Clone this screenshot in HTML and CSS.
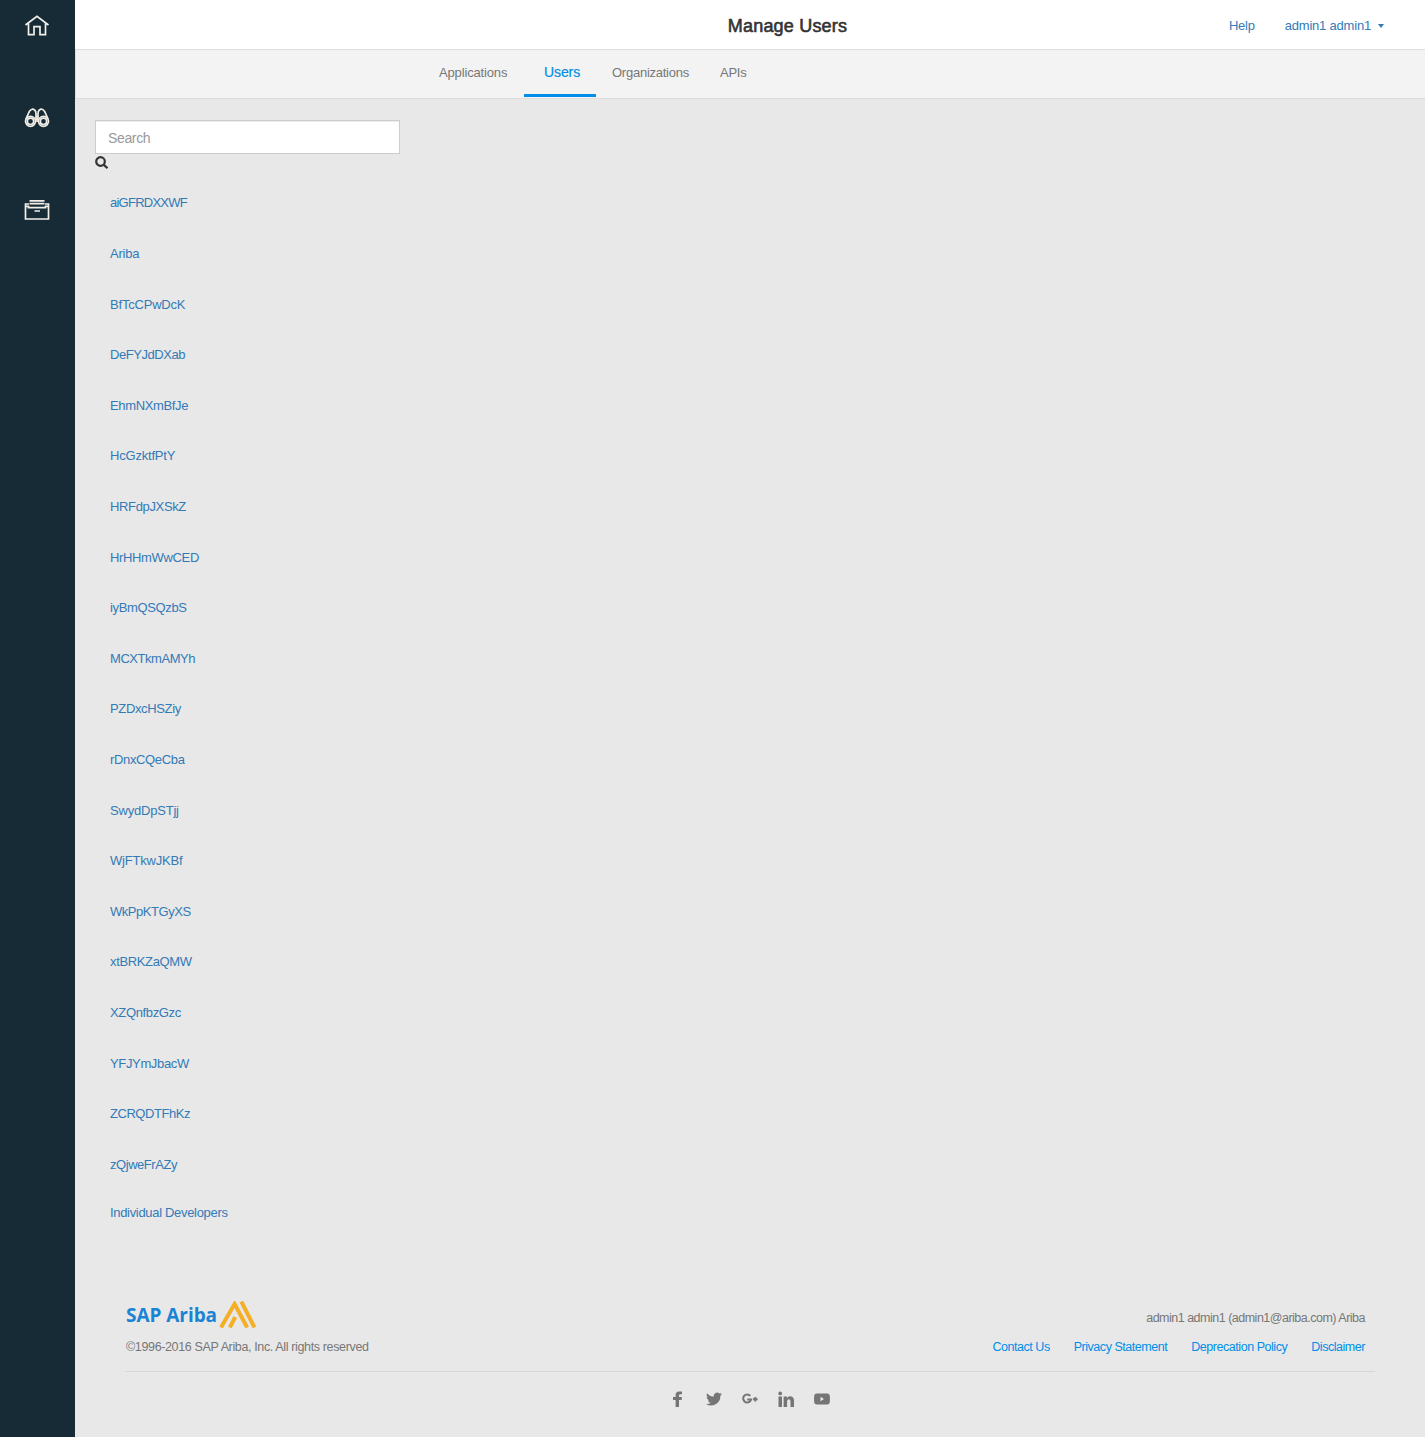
FILE: index.html
```html
<!DOCTYPE html>
<html lang="en">
<head>
<meta charset="utf-8">
<title>Manage Users</title>
<link rel="stylesheet" href="styles.css">
</head>
<body>
<div class="app">
  <aside class="sidebar">
    <a class="side-link"><svg width="26" height="22" viewBox="0 0 26 22"><path d="M1.500 10 13 1.300l11.500 8.700M4.500 8.500v11.200h5.500v-8h6v8h5.500V8.500"/></svg></a>
    <a class="side-link"><svg width="26" height="22" viewBox="0 0 26 22"><circle cx="6.500" cy="14.300" r="5"/><circle cx="6.500" cy="14.300" r="3.200"/><circle cx="19.500" cy="14.300" r="5"/><circle cx="19.500" cy="14.300" r="3.200"/><path d="M1.900 12 5.500 4.200Q8 .8 10.800 3.200Q12 4.500 12 7v8M24.100 12 20.500 4.200Q18 .8 15.200 3.200Q14 4.500 14 7v8M12 9.500h2M12 12h2"/></svg></a>
    <a class="side-link"><svg width="26" height="22" viewBox="0 0 26 22"><path d="M5 5H1.500v15h23V5H21M5.500 1.800h15M5.500 4.700h15M2 7.300h2.500v1.400h17V7.300H24M10.500 12h5.500"/></svg></a>
  </aside>
  <div class="page">
    <header class="topbar">
      <h1 class="title">Manage Users</h1>
      <div class="account"><a class="help">Help</a><a class="user">admin1 admin1</a><span class="caret"></span></div>
    </header>
    <nav class="tabs">
      <a class="tab tab-applications">Applications</a>
      <a class="tab active">Users</a>
      <a class="tab tab-organizations">Organizations</a>
      <a class="tab tab-apis">APIs</a>
    </nav>
    <main class="content">
      <input class="search" type="text" placeholder="Search">
      <svg class="search-icon" width="14" height="14" viewBox="0 0 14 14"><circle cx="5.500" cy="5.500" r="4.300"/><path d="m8.600 8.600 3.900 3.700"/></svg>
      <ul class="orgs">
        <li><a class="condensed">aiGFRDXXWF</a></li>
        <li><a class="loose">Ariba</a></li>
        <li><a class="loose">BfTcCPwDcK</a></li>
        <li><a class="tight">DeFYJdDXab</a></li>
        <li><a>EhmNXmBfJe</a></li>
        <li><a class="loose">HcGzktfPtY</a></li>
        <li><a>HRFdpJXSkZ</a></li>
        <li><a>HrHHmWwCED</a></li>
        <li><a>iyBmQSQzbS</a></li>
        <li><a class="tight">MCXTkmAMYh</a></li>
        <li><a>PZDxcHSZiy</a></li>
        <li><a>rDnxCQeCba</a></li>
        <li><a class="loose">SwydDpSTjj</a></li>
        <li><a class="loose">WjFTkwJKBf</a></li>
        <li><a class="tight">WkPpKTGyXS</a></li>
        <li><a>xtBRKZaQMW</a></li>
        <li><a>XZQnfbzGzc</a></li>
        <li><a>YFJYmJbacW</a></li>
        <li><a class="tight">ZCRQDTFhKz</a></li>
        <li><a class="tight">zQjweFrAZy</a></li>
      </ul>
      <a class="individual">Individual Developers</a>
    </main>
    <footer class="footer">
      <div class="footer-main">
        <div class="brand">
          <div class="logo"><span class="logo-text">SAP Ariba</span><svg width="38" height="27" viewBox="0 0 38 27"><path d="M2 26.500 15.600 3 28.200 26.500M22.300 .5 35.500 26.500M10.800 26.500 16.300 16"/></svg></div>
          <p class="copyright">©1996-2016 SAP Ariba, Inc. All rights reserved</p>
        </div>
        <div class="legal">
          <p class="identity">admin1 admin1 (admin1@ariba.com) Ariba</p>
          <div class="links"><a>Contact Us</a><a>Privacy Statement</a><a>Deprecation Policy</a><a>Disclaimer</a></div>
        </div>
      </div>
      <div class="social">
        <svg width="16" height="16" viewBox="0 0 16 16"><path d="M5.600 16V9H3V6h2.600V4Q5.600.5 9.200.5H12v2.700h-1.700Q9 3.200 9 4.500V6h3l-.4 3H9v7z"/></svg>
        <svg width="16" height="16" viewBox="0 0 24 24"><path d="M24 4.600a10 10 0 0 1-2.800.8 5 5 0 0 0 2.100-2.700 10 10 0 0 1-3.100 1.200 4.900 4.900 0 0 0-8.400 4.500A14 14 0 0 1 1.700 3.200a4.900 4.900 0 0 0 1.500 6.500 5 5 0 0 1-2.200-.6 4.900 4.900 0 0 0 3.900 4.900 5 5 0 0 1-2.200.1 4.900 4.900 0 0 0 4.600 3.400A9.900 9.900 0 0 1 0 19.500a14 14 0 0 0 21.500-12.400A10 10 0 0 0 24 4.600z"/></svg>
        <svg width="16" height="16" viewBox="0 0 16 16"><path class="line" d="M8.300 4.900A4 4 0 1 0 9.100 8.500H5.300M11 8.300h4.600M13.300 6v4.600"/></svg>
        <svg width="16" height="16" viewBox="0 0 16 16"><path d="M.5 5.500h3.500V16H.5zM2.200.5a1.900 1.900 0 1 1 0 3.800 1.900 1.900 0 0 1 0-3.800zM5.600 5.500h3.300v1.400Q10 5.200 12 5.200q4 0 4 4.500V16h-3.500v-5.600q0-2.200-1.700-2.200Q9.100 8.200 9.100 10.400V16H5.600z"/></svg>
        <svg width="16" height="16" viewBox="0 0 16 16"><path fill-rule="evenodd" d="M3 2.600Q8 2.200 13 2.600q2.800 0 2.800 2.700.3 2.700 0 5.400 0 2.700-2.800 2.700-5 .4-10 0-2.800 0-2.800-2.700-.3-2.700 0-5.400Q.2 2.600 3 2.600zM6.500 5.800v4.400L10 8z"/></svg>
      </div>
    </footer>
  </div>
</div>
</body>
</html>
```
FILE: styles.css
```css
* { box-sizing: border-box; }
body { margin: 0; font: 13px/20px "Liberation Sans", Arial, sans-serif; letter-spacing: -0.25px; color: #777; background: #e8e8e8; }
h1, p, ul { margin: 0; padding: 0; font-weight: normal; }
ul { list-style: none; }
svg { display: block; flex: none; }
.app { display: flex; height: 1437px; }
.sidebar { width: 75px; background: #172b36; display: flex; flex-direction: column; align-items: center; gap: 70px; padding: 15px 1px 0 0; }
.side-link svg { fill: none; stroke: #f2efe9; stroke-width: 1.700; }
.page { flex: 1; display: flex; flex-direction: column; }
.topbar { height: 50px; background: #fff; border-bottom: 1px solid #ddd; display: grid; grid-template-columns: 1fr auto 1fr; align-items: center; padding: 2px 41px 0 116px; }
.title { grid-column: 2; font-size: 18px; letter-spacing: 0.2px; color: #333; -webkit-text-stroke: 0.6px #333; }
.account { justify-self: end; display: flex; align-items: center; color: #337ab7; }
.user { margin-left: 30px; letter-spacing: -0.2px; }
.caret { margin: 1px 0 0 7px; border: 3.500px solid transparent; border-top-width: 4px; border-top-color: #337ab7; border-bottom: 0; }
.tabs { height: 49px; background: #f3f3f3; border-bottom: 1px solid #ddd; border-left: 1px solid #ddd; padding-left: 363px; display: flex; }
.tab { height: 47px; padding-top: 13px; }
.tab-applications { width: 85px; letter-spacing: -0.15px; }
.active { width: 72px; text-align: center; padding: 12px 0 0 4px; font-size: 14px; letter-spacing: -0.1px; color: #008ee8; border-bottom: 3px solid #008ee8; -webkit-text-stroke: 0.2px #008ee8; }
.tab-organizations { margin-left: 16px; width: 108px; }
.content { padding: 21px 20px 0; height: 1202px; }
.search { display: block; width: 305px; height: 34px; border: 1px solid #ccc; border-radius: 0; padding: 2px 12px 0; box-shadow: inset 0 1px 1px rgba(0,0,0,.075); font: 14px "Liberation Sans", Arial, sans-serif; letter-spacing: -0.35px; }
.search::placeholder { color: #999; }
.search-icon { margin-top: 2px; fill: none; stroke: #333; stroke-width: 2.200; }
.orgs { padding: 23.450px 15px 0; color: #337ab7; letter-spacing: -0.350px; }
.orgs li { height: 50.600px; }
.loose { letter-spacing: -0.2px; }
.tight { letter-spacing: -0.450px; }
.condensed { letter-spacing: -0.750px; }
.individual { display: block; margin: -2.400px 15px 0; color: #337ab7; letter-spacing: -0.320px; }
.footer { padding: 0 50px; }
.footer-main { height: 71px; border-bottom: 1px solid #d8d8d8; padding: 0 10px 0 1px; display: flex; justify-content: space-between; font-size: 12.500px; letter-spacing: -0.360px; }
.logo { height: 26px; display: flex; }
.logo-text { width: 93px; font: bold 19px/28px "Open Sans", sans-serif; letter-spacing: -0.050px; color: #1a83d4; white-space: nowrap; }
.logo path { fill: none; stroke: #f5af27; stroke-width: 4; }
.copyright { margin-top: 10px; }
.legal { padding-top: 7px; }
.identity { text-align: right; letter-spacing: -0.500px; }
.links { display: flex; justify-content: flex-end; gap: 24px; margin-top: 9px; color: #008ee8; letter-spacing: -0.460px; }
.social { display: flex; justify-content: center; gap: 20px; padding-top: 19px; }
.social path { fill: #757575; }
.social .line { fill: none; stroke: #757575; stroke-width: 2; }
```
